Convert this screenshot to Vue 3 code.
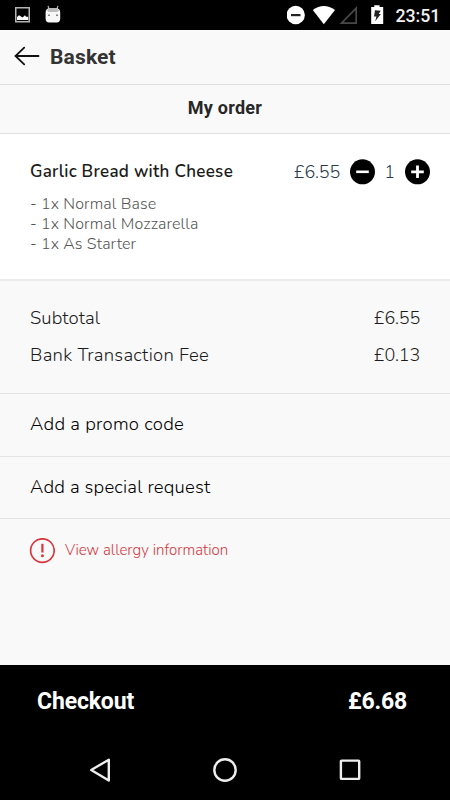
<script setup>
const options = ['- 1x Normal Base', '- 1x Normal Mozzarella', '- 1x As Starter']
const fees = [
  { label: 'Subtotal', value: '£6.55', cls: 'subtotal' },
  { label: 'Bank Transaction Fee', value: '£0.13', cls: 'bank' },
]
</script>

<template>
  <div class="screen">
    <div class="status">
      <svg class="photo" width="16" height="16" viewBox="0 0 16 16">
        <rect x=".75" y=".75" width="13.500" height="14" fill="none" stroke="#b5b5b5" stroke-width="1.500" />
        <path d="M2 13V10l2-1.800L6 9.500l1.500 1L10 8.200l1 1.600h2.200V13z" fill="#fff" />
      </svg>
      <svg class="robot" width="16" height="18" viewBox="0 0 16 18">
        <path d="M4 4 3.100.9M12 4l.9-3.100" stroke="#aaa" stroke-width="1.300" />
        <path d="M.6 7.500Q.6 3.200 5 3.200h6q4.200 0 4.200 4.300v6q0 3.900-3.500 3.900H4.100Q.6 17.400 .6 13.500z" fill="#f7f7f7" />
        <path d="M2 5.500Q3 3.200 5 3.200h6q2 0 3 2.300-1 1.500-3 1.500H5Q3 7 2 5.500z" fill="#bbb" />
        <path d="M3.200 9.500h1.600v1.600H3.200zM11.200 9.500h1.600v1.600h-1.600z" fill="#666" />
      </svg>
      <span class="grow"></span>
      <svg width="163" height="30" viewBox="287 0 163 30" class="signals">
        <circle cx="295.700" cy="15" r="9.200" fill="#fff" />
        <rect x="291" y="14" width="9.500" height="2.200" fill="#222" />
        <path d="M312.800 10Q323.800 2 335 10L323.800 24.200z" fill="#fff" />
        <path d="M341.500 23.200H356.200V8.200z" fill="none" stroke="#484848" stroke-width="1.700" />
        <path d="M371.200 7h3V5.200h5.400V7h3.600v17h-12z" fill="#fff" />
        <path d="M375 10.200l5.700.6-2 3.200h2.200L375.200 21.300l1.200-4.800H374z" fill="#222" />
        <text x="395.500" y="21.900" class="clock">23:51</text>
      </svg>
    </div>

    <header class="toolbar">
      <svg class="back" width="26" height="20" viewBox="0 0 26 20" fill="none" stroke="#111" stroke-width="1.800" stroke-linecap="round">
        <path d="M24.500 10H1.500M10.200 1.700 1.500 10l8.700 8.300" />
      </svg>
      <h1>Basket</h1>
    </header>
    <h2 class="order">My order</h2>

    <section class="item">
      <div class="line">
        <span class="name">Garlic Bread with Cheese</span>
        <span class="price">£6.55</span>
        <svg width="26" height="26" viewBox="0 0 26 26">
          <circle cx="12.500" cy="12.800" r="12.500" /><path d="M6.200 12.800h12.600" stroke="#fff" stroke-width="2.600" />
        </svg>
        <span class="qty">1</span>
        <svg width="26" height="26" viewBox="0 0 26 26">
          <circle cx="12.500" cy="12.800" r="12.500" /><path d="M6.200 12.800h12.600M12.500 6.500v12.600" stroke="#fff" stroke-width="2.800" />
        </svg>
      </div>
      <div class="options"><div v-for="o in options" :key="o">{{ o }}</div></div>
    </section>

    <section class="fees">
      <div v-for="f in fees" :key="f.label" class="fee">
        <span :class="f.cls">{{ f.label }}</span><span class="amount">{{ f.value }}</span>
      </div>
    </section>

    <div class="action promo"><span>Add a promo code</span></div>
    <div class="action special"><span>Add a special request</span></div>
    <div class="allergy">
      <svg width="26" height="26" viewBox="0 0 26 26" fill="none" stroke="#d6373d">
        <circle cx="13.400" cy="12.600" r="11.800" stroke-width="1.700" />
        <path d="M13.400 5.800v8.700" stroke-width="2.200" />
        <circle cx="13.400" cy="17.800" r="1.500" fill="#d6373d" stroke="none" />
      </svg>
      <span>View allergy information</span>
    </div>

    <footer class="checkout"><span class="cta">Checkout</span><span class="total">£6.68</span></footer>
    <nav class="nav">
      <svg width="22" height="26" viewBox="0 0 22 26"><path d="M2.200 13 19.800 2.700v20.800z" /></svg>
      <svg width="26" height="26" viewBox="0 0 26 26"><circle cx="13" cy="13" r="10.700" /></svg>
      <svg width="22" height="26" viewBox="0 0 22 26"><rect x="1.900" y="3.600" width="18.300" height="18.300" rx=".7" /></svg>
    </nav>
  </div>
</template>

<style>
body { margin: 0; }
</style>

<style scoped>
.screen { box-sizing: border-box; width: 450px; height: 800px; display: flex; flex-direction: column; overflow: hidden; background: #f9f9f9; color: #1c1c1c; font-family: Nunito, "Open Sans", sans-serif; white-space: nowrap; }
.screen > * { box-sizing: border-box; flex: none; }
svg { display: block; flex: none; }
.status { height: 30px; background: #000; display: flex; align-items: center; padding-left: 15px; }
.robot { margin: -3px 0 0 14px; }
.grow { flex: 1; }
.clock { font: 500 17.700px Roboto, sans-serif; fill: #f2f2f2; }
.toolbar { height: 55px; border-bottom: 1px solid #dfdfdf; display: flex; align-items: center; padding-left: 14px; gap: 10px; }
.back { margin-top: -3px; }
h1, h2 { margin: 0; font-family: Roboto, sans-serif; font-weight: 700; }
h1 { font-size: 21px; line-height: 26px; letter-spacing: .15px; color: #333; }
.order { height: 49px; border-bottom: 1px solid #dfdfdf; text-align: center; font-size: 18px; line-height: 46px; letter-spacing: .25px; color: #272727; }
.item { height: 147px; background: #fff; border-bottom: 2px solid #ebebeb; padding: 25px 19px 0 30px; }
.line { display: flex; align-items: center; height: 26px; }
.name { font-size: 17px; font-weight: 600; letter-spacing: .28px; line-height: 26px; flex: 1; }
.price, .qty { font-size: 18px; font-weight: 300; letter-spacing: -.2px; color: #2b3b4b; }
.price { margin-right: 10px; }
.qty { width: 29px; text-align: center; padding-right: 2px; box-sizing: border-box; }
.options { padding-top: 9px; font-size: 16px; font-weight: 300; line-height: 20px; letter-spacing: .13px; color: #555; }
.fees { height: 113px; border-bottom: 1px solid #e4e4e4; padding-top: 19px; }
.fee { display: flex; justify-content: space-between; height: 36px; line-height: 37px; padding: 0 30px; font-size: 18px; font-weight: 300; }
.fee + .fee { padding-top: 1px; }
.subtotal { font-size: 18.500px; letter-spacing: .1px; }
.bank { font-size: 18.500px; letter-spacing: .27px; }
.amount { letter-spacing: -.2px; }
.action { height: 63px; border-bottom: 1px solid #e4e4e4; padding-left: 30px; font-size: 18.500px; font-weight: 350; letter-spacing: .27px; line-height: 60px; color: #000; }
.special { height: 62px; letter-spacing: .18px; }
.allergy { height: 146px; padding: 19px 0 0 29px; display: flex; gap: 10px; font-size: 15px; font-weight: 350; letter-spacing: .04px; line-height: 24px; color: #d6373d; }
.checkout { height: 74px; background: #000; color: #fff; display: flex; justify-content: space-between; padding: 0 43px 0 37px; font: 700 23px/74px Roboto, sans-serif; letter-spacing: -.15px; }
.total { letter-spacing: -.2px; }
.nav { flex: 1; background: #000; display: flex; justify-content: space-between; align-items: center; padding: 1px 89px 0; }
.nav svg { fill: none; stroke: #eee; stroke-width: 2.400; stroke-linejoin: round; }
</style>
